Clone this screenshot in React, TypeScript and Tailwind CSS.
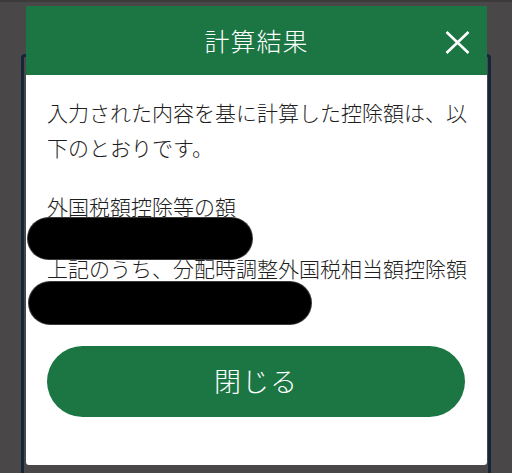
import React from 'react';

const font = { fontFamily: '"Noto Sans CJK JP", "Noto Sans", sans-serif' };

const CloseIcon = () => (
  <svg width="25" height="23" viewBox="0 0 25 23" fill="none">
    <path d="M1.5 1 L23.5 22 M23.5 1 L1.5 22" stroke="#ffffff" strokeWidth="2.6" />
  </svg>
);

const Redacted = ({ left, top, width, height }: { left: string; top: string; width: string; height: string }) => (
  <div className={`absolute ${left} ${top} ${width} ${height} rounded-full bg-black ring-1 ring-[#3a3a3a]`} />
);

export default function App() {
  return (
    <div className="relative w-[512px] h-[473px] overflow-hidden bg-[#494747]" style={font}>
      <div className="h-[2px] bg-[#3c3b3b]" />
      {/* page behind the dialog */}
      <div className="absolute left-[21px] top-[54px] w-[470px] h-[440px] rounded-sm border-[3px] border-[#16263a]" />

      {/* dialog */}
      <div className="absolute left-[26px] top-[6px] w-[461px] h-[459px] flex flex-col bg-white rounded-b-[3px]">
        <div className="relative h-[69px] flex items-center justify-center bg-[#1b7644]">
          <h2 className="text-[25px] leading-none font-light text-white tracking-[1px]">計算結果</h2>
          <button className="absolute right-[17px] top-[25px]">
            <CloseIcon />
          </button>
        </div>

        <div className="pl-[21px] pr-[18px] pt-[20px] text-[#1e1e1e] text-[21px] font-light">
          <p className="leading-[35px]">入力された内容を基に計算した控除額は、以下のとおりです。</p>

          <div className="mt-[26px] leading-[31px]">
            <p>外国税額控除等の額</p>
            <div className="relative h-[31px]">
              <Redacted left="-left-[19px]" top="-top-[4px]" width="w-[224px]" height="h-[41px]" />
            </div>
            <p className="relative">上記のうち、分配時調整外国税相当額控除額</p>
            <div className="relative h-[31px]">
              <Redacted left="-left-[18px]" top="-top-[2px]" width="w-[282px]" height="h-[42px]" />
            </div>
          </div>

          <button className="mt-[31px] w-[418px] h-[71px] rounded-full bg-[#1b7644] text-white text-[27px] font-light tracking-[1px]">
            閉じる
          </button>
        </div>
      </div>
    </div>
  );
}
